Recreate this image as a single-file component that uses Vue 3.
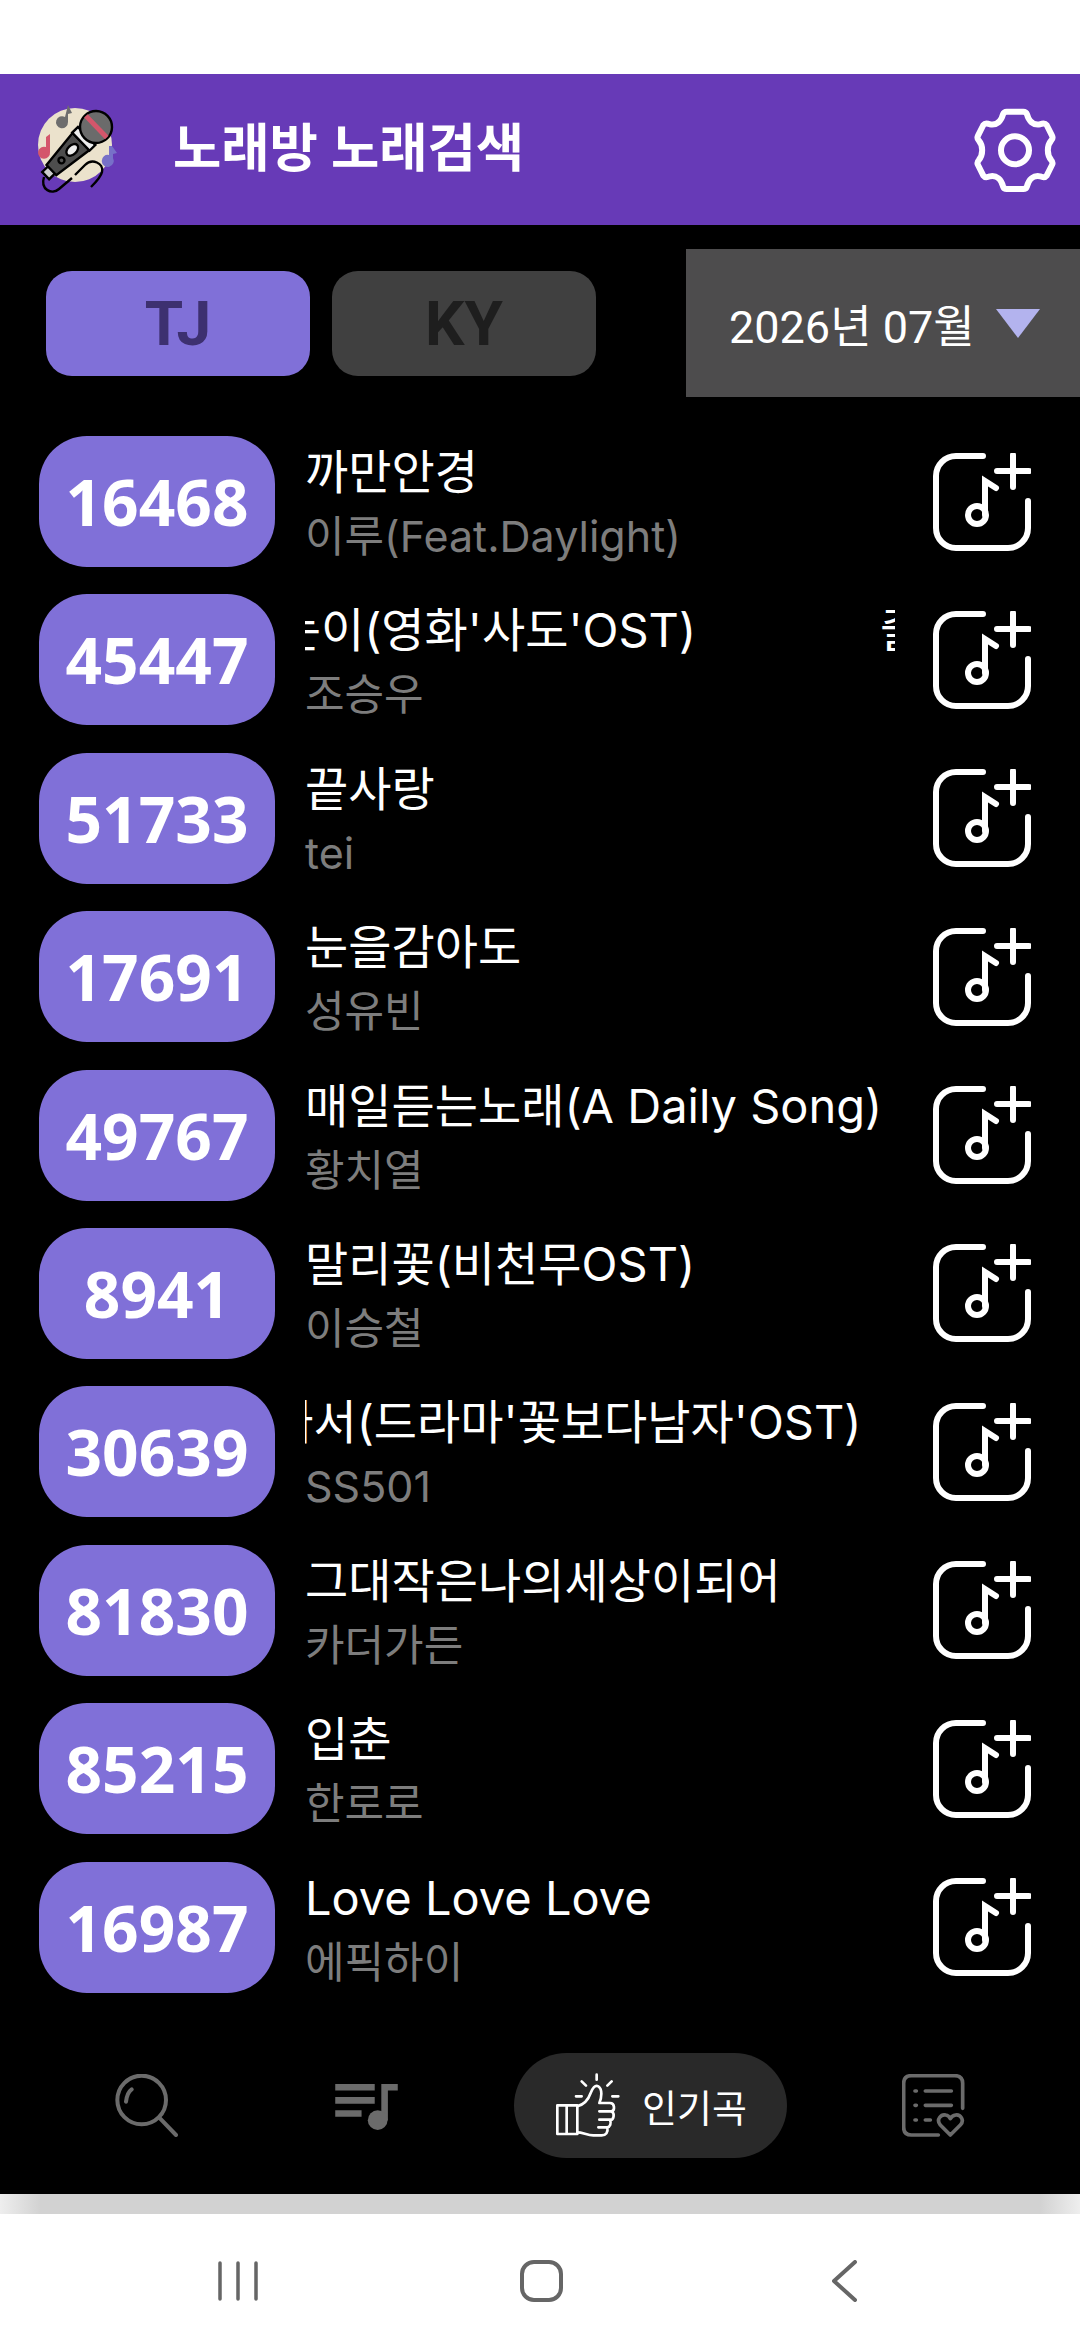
<script setup>
const songs = [
  { no: 16468, title: '까만안경', artist: '이루(Feat.Daylight)' },
  { no: 45447, title: "줄수없는이(영화'사도'OST)", artist: '조승우', scroll: -157, loop: true },
  { no: 51733, title: '끝사랑', artist: 'tei' },
  { no: 17691, title: '눈을감아도', artist: '성유빈' },
  { no: 49767, title: '매일듣는노래(A Daily Song)', artist: '황치열' },
  { no: 8941, title: '말리꽃(비천무OST)', artist: '이승철' },
  { no: 30639, title: "내머리가나빠서(드라마'꽃보다남자'OST)", artist: 'SS501', scroll: -251 },
  { no: 81830, title: '그대작은나의세상이되어', artist: '카더가든' },
  { no: 85215, title: '입춘', artist: '한로로' },
  { no: 16987, title: 'Love Love Love', artist: '에픽하이' },
]
</script>

<template>
  <div class="page">
    <div class="status"></div>

    <header class="header">
      <svg class="logo" viewBox="30 102 95 95">
        <circle cx="75" cy="145" r="37" fill="#ebe2cc" />
        <path d="M68 105l4 8-4 1v8a6 6 0 1 1-3-5z" fill="#6d6d6d" />
        <path d="M50 134v18a6 6 0 1 1-4-5v-10z" fill="#d4566b" />
        <path d="M112 146l5 7-4 1v4a6 6 0 1 1-4-3v-9z" fill="#7770c8" />
        <path
          d="M44 177C40 190 52 195 59 189L72 178M75 175L85 165C92 158 104 163 102 172C101 177 96 182 91 187"
          fill="none"
          stroke="#000"
          stroke-width="2.4"
        />
        <g transform="translate(96 127) rotate(136)" stroke="#000" stroke-width="2.4">
          <rect x="60" y="-5" width="10" height="10" fill="#ccc" />
          <path d="M21 -12L62 -7V7L21 12Z" fill="#4d4d4d" />
          <rect x="13" y="-12.5" width="8" height="25" fill="#eee" />
          <circle r="16" fill="#6b6b6b" />
          <rect x="-3" y="-15" width="5" height="30" fill="#d4566b" stroke="none" />
          <ellipse cx="33" rx="7" ry="4.5" fill="#eee" />
          <circle cx="48" r="3" fill="#555" />
        </g>
      </svg>
      <h1 class="app-title">노래방 노래검색</h1>
      <svg class="gear" viewBox="60 40 270 270" fill="none" stroke="#fff" stroke-width="18">
        <path
          d="M170 60H220Q228 60 231 68C236 88 250 102 270 98Q284 92 290 100L306 132Q310 140 304 146C290 162 290 190 304 206Q310 212 306 220L290 252Q284 260 270 254C250 250 236 264 231 284Q228 292 220 292H170Q162 292 159 284C154 264 140 250 120 254Q106 260 100 252L84 220Q80 212 86 206C100 190 100 162 86 146Q80 140 84 132L100 100Q106 92 120 98C140 102 154 88 159 68Q162 60 170 60Z"
        />
        <circle cx="195" cy="176" r="42" />
      </svg>
    </header>

    <main class="content">
      <div class="toolbar">
        <button class="brand active">TJ</button>
        <button class="brand">KY</button>
        <div class="month">
          <span>2026년 07월</span>
          <i class="arrow"></i>
        </div>
      </div>

      <ul class="songs">
        <li v-for="song in songs" :key="song.no" class="song">
          <div class="number">{{ song.no }}</div>
          <div class="info">
            <div class="title-clip">
              <div class="title-track" :style="{ marginLeft: (song.scroll || 0) + 'px' }">
                <span>{{ song.title }}</span>
                <span v-if="song.loop">{{ song.title }}</span>
              </div>
            </div>
            <div class="artist">{{ song.artist }}</div>
          </div>
          <svg class="add" viewBox="0 0 98 98" fill="none" stroke="#fff" stroke-width="6" stroke-linecap="round">
            <path d="M50 3H23A20 20 0 0 0 3 23V75A20 20 0 0 0 23 95H75A20 20 0 0 0 95 75V48" />
            <path d="M64 18H96M80 2V34" />
            <path d="M52 62V28L63 35" />
            <circle cx="44" cy="62" r="9" />
          </svg>
        </li>
      </ul>

      <nav class="tabs">
        <svg class="tab-search" viewBox="105 72 189 189" fill="none" stroke="#6b6b6b" stroke-width="12" stroke-linecap="round">
          <circle cx="185" cy="150" r="73" />
          <path d="M240 205L288 255M155 118Q141 128 138 155" />
        </svg>
        <svg class="tab-list" viewBox="765 85 190 155" fill="#6b6b6b">
          <path d="M765 97H885V117H765ZM765 137H885V157H765ZM765 177H845V197H765ZM905 97H955V117H925V207H905Z" />
          <circle cx="894" cy="207" r="30" />
        </svg>
        <div class="tab-active">
          <svg class="thumb" viewBox="165 100 195 195" fill="none" stroke="#fff" stroke-width="8" stroke-linecap="round" stroke-linejoin="round">
            <path d="M172 197H232V283H172ZM200 197V283" />
            <path d="M232 200C250 195 265 180 272 160C278 145 285 135 295 140C308 148 305 175 298 190H330C345 190 345 212 335 215C345 222 342 240 330 242C335 250 330 262 322 263C325 278 318 287 305 287H280C262 287 248 278 232 278" />
            <path d="M298 215H335M298 240H330M295 263H322" />
            <path d="M290 105V120M245 125L258 138M335 125L322 138M228 170H245M337 170H355" />
          </svg>
          <span>인기곡</span>
        </div>
        <svg class="tab-fav" viewBox="127 102 189 189" fill="none" stroke="#6b6b6b" stroke-width="11" stroke-linecap="round" stroke-linejoin="round">
          <path d="M236 285H155Q132 285 132 262V130Q132 107 155 107H285Q309 107 309 130V205" />
          <path d="M197 153H275M197 196H275M197 240H212M166 153H170M166 196H170M166 240H170" />
          <path d="M272 285L242 255C228 238 245 222 258 225C265 226 270 232 272 236C275 230 282 226 288 225C302 223 316 240 302 255Z" />
        </svg>
      </nav>
    </main>

    <div class="shade"></div>

    <footer class="system-nav">
      <svg class="sys-recent" viewBox="0 0 40 40" stroke="#666" stroke-width="3.5" stroke-linecap="round">
        <path d="M2 2V38M20 2V38M38 2V38" />
      </svg>
      <div class="sys-home"></div>
      <svg class="sys-back" viewBox="0 0 25 42" fill="none" stroke="#666" stroke-width="4" stroke-linecap="round" stroke-linejoin="round">
        <path d="M23 2L2 21L23 40" />
      </svg>
    </footer>
  </div>
</template>

<style scoped>
.page {
  display: flex;
  flex-direction: column;
  width: 1080px;
  height: 2340px;
  overflow: hidden;
  background: #fff;
  font-family: Roboto, "Noto Sans CJK KR", sans-serif;
}

.status {
  height: 74px;
}

.header {
  display: flex;
  align-items: center;
  height: 151px;
  padding: 0 20px 0 30px;
  background: #673ab7;
}

.logo {
  width: 95px;
  height: 95px;
}

.app-title {
  flex: 1;
  margin: 0 0 11px 48px;
  font-size: 52.5px;
  font-weight: 700;
  color: #fff;
}

.gear {
  width: 90px;
  height: 90px;
}

.content {
  height: 1969px;
  background: #000;
}

.toolbar {
  display: flex;
  align-items: center;
  height: 148px;
  margin-top: 24px;
  padding-left: 46px;
}

.brand {
  width: 264px;
  height: 105px;
  margin-right: 22px;
  padding: 0;
  border: 0;
  border-radius: 26px;
  background: #404040;
  color: #1e1e1e;
  font-family: inherit;
  font-size: 62px;
  font-weight: 700;
}

.brand.active {
  background: #8070d8;
  color: #3d3070;
}

.month {
  display: flex;
  align-items: center;
  height: 148px;
  margin-left: 68px;
  padding-left: 43px;
  flex: 1;
  background: #4d4c4d;
  color: #fff;
  font-size: 45px;
}

.arrow {
  width: 0;
  height: 0;
  margin-left: 21px;
  border-left: 22px solid transparent;
  border-right: 22px solid transparent;
  border-top: 29px solid #b3b3ee;
}

.songs {
  display: flex;
  flex-direction: column;
  gap: 27.4px;
  margin: 39px 0 0;
  padding: 0;
  list-style: none;
}

.song {
  display: flex;
  align-items: center;
  height: 131px;
  padding-left: 39px;
}

.number {
  width: 236px;
  height: 131px;
  border-radius: 48px;
  background: #8070d8;
  color: #fff;
  font-family: "Noto Sans", Roboto, sans-serif;
  font-size: 64px;
  font-weight: 700;
  line-height: 131px;
  text-align: center;
}

.info {
  width: 590px;
  margin-left: 30px;
  font-family: Inter, "Noto Sans CJK KR", sans-serif;
}

.title-clip {
  overflow: hidden;
  height: 62px;
  margin-top: 4px;
}

.title-track {
  display: flex;
  gap: 184px;
  width: max-content;
  color: #fff;
  font-size: 47px;
  line-height: 62px;
  white-space: nowrap;
}

.artist {
  margin-top: 3px;
  color: #7d7d7d;
  font-size: 43px;
  line-height: 60px;
}

.add {
  width: 98px;
  height: 98px;
  margin-left: 38px;
}

.tabs {
  display: flex;
  align-items: center;
  height: 105px;
  margin-top: 60px;
  padding-left: 115px;
}

.tab-search {
  width: 63px;
  height: 63px;
}

.tab-list {
  width: 63px;
  height: 51px;
  margin-left: 157px;
}

.tab-active {
  display: flex;
  align-items: center;
  width: 273px;
  height: 105px;
  margin-left: 116px;
  padding-left: 41px;
  box-sizing: border-box;
  border-radius: 53px;
  background: #292929;
  color: #fff;
  font-size: 38px;
}

.thumb {
  width: 65px;
  height: 65px;
  margin-right: 22px;
}

.tab-fav {
  width: 63px;
  height: 63px;
  margin-left: 115px;
}

.shade {
  height: 20px;
  background: linear-gradient(90deg, #eee, #d2d2d2 40px, #d2d2d2 1040px, #eee);
}

.system-nav {
  flex: 1;
  display: flex;
  align-items: center;
  padding: 8px 0 0 218px;
}

.sys-recent {
  width: 40px;
  height: 40px;
}

.sys-home {
  width: 43px;
  height: 42px;
  margin-left: 262px;
  box-sizing: border-box;
  border: 4px solid #666;
  border-radius: 14px;
}

.sys-back {
  width: 25px;
  height: 42px;
  margin-left: 269px;
}
</style>

<style>
body {
  background: #fff;
}
</style>
